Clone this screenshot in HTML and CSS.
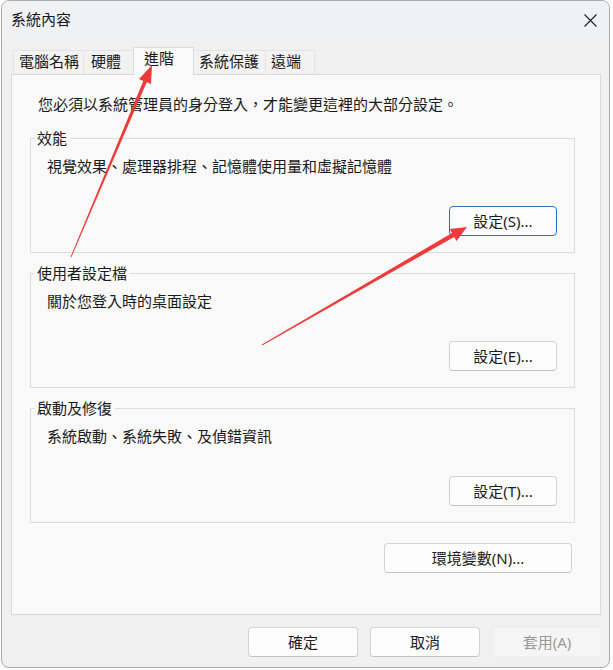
FILE: index.html
```html
<!DOCTYPE html>
<html lang="zh-Hant">
<head>
<meta charset="utf-8">
<title>系統內容</title>
<link rel="stylesheet" href="styles.css">
</head>
<body>
<div class="window">
  <div class="titlebar">
    <span class="title">系統內容</span>
    <span class="close" aria-label="關閉">
      <svg width="13" height="13" viewBox="0 0 13 13"><path d="M0.5 0.5 L12.5 12.5 M12.5 0.5 L0.5 12.5" stroke="#1f1f1f" stroke-width="1.1" fill="none"/></svg>
    </span>
  </div>
  <div class="tabs">
    <div class="tab t1">電腦名稱</div>
    <div class="tab t2">硬體</div>
    <div class="tab t3 active">進階</div>
    <div class="tab t4">系統保護</div>
    <div class="tab t5">遠端</div>
  </div>
  <div class="panel">
    <p class="intro">您必須以系統管理員的身分登入，才能變更這裡的大部分設定。</p>
    <fieldset class="group">
      <legend>效能</legend>
      <p class="desc">視覺效果、處理器排程、記憶體使用量和虛擬記憶體</p>
      <div class="actions"><button class="btn set focus">設定(S)...</button></div>
    </fieldset>
    <fieldset class="group">
      <legend>使用者設定檔</legend>
      <p class="desc">關於您登入時的桌面設定</p>
      <div class="actions"><button class="btn set">設定(E)...</button></div>
    </fieldset>
    <fieldset class="group">
      <legend>啟動及修復</legend>
      <p class="desc">系統啟動、系統失敗、及偵錯資訊</p>
      <div class="actions"><button class="btn set">設定(T)...</button></div>
    </fieldset>
    <div class="env-row"><button class="btn env">環境變數(N)...</button></div>
  </div>
  <div class="footer">
    <button class="btn foot">確定</button>
    <button class="btn foot">取消</button>
    <button class="btn foot disabled">套用(A)</button>
  </div>
</div>
<svg class="arrows" width="613" height="670" viewBox="0 0 613 670">
  <polygon fill="#ee3a3a" points="71.4,257.2 146.7,82.3 151.0,84.1 152,65 139.0,79.1 143.3,80.9 70.6,256.8"/>
  <polygon fill="#ee3a3a" points="262.2,345.4 454.2,236.9 456.6,241.1 467,227 449.6,228.9 452.0,233.1 261.8,344.6"/>
</svg>
</body>
</html>
```
FILE: styles.css
```css
* { box-sizing: border-box; }
html, body {
  margin: 0;
  padding: 0;
  background: #ffffff;
}
body {
  font-family: "Noto Sans", "Noto Sans CJK TC", sans-serif;
  font-size: 15px;
  color: #1a1a1a;
  width: 613px;
  height: 670px;
  overflow: hidden;
}
.window {
  margin-left: 1px;
  width: 609px;
  height: 668px;
  border: 1px solid #ababab;
  border-radius: 8px;
  background: #f0f0f0;
  display: flex;
  flex-direction: column;
  overflow: hidden;
}
.titlebar {
  height: 40px;
  display: flex;
  justify-content: space-between;
  align-items: center;
  padding: 0 12px 0 9px;
  background: #eff1f3;
}
.title {
  line-height: 20px;
  margin-top: -4px;
}
.close {
  display: flex;
  margin-top: -2px;
}
.tabs {
  height: 33px;
  display: flex;
  align-items: flex-end;
  padding-left: 11px;
  position: relative;
  z-index: 2;
}
.tab {
  height: 24px;
  line-height: 21px;
  border: 1px solid #e3e3e3;
  border-bottom: none;
  background: #f2f2f2;
  white-space: nowrap;
  margin-right: -1px;
}
.t1 { width: 71px; padding-left: 5px; }
.t2 { width: 51px; padding-left: 7px; }
.t3 { width: 61px; padding-left: 10px; }
.t4 { width: 73px; padding-left: 5px; }
.t5 { width: 50px; padding-left: 5px; }
.tab.active {
  height: 28px;
  margin-bottom: -1px;
  line-height: 21px;
  background: #f9f9f9;
  border-color: #dadada;
  position: relative;
  z-index: 3;
}
.panel {
  margin: 0 8px 0 9px;
  height: 541px;
  border: 1px solid #d9d9d9;
  background: #f9f9f9;
  padding: 19px 25px 0 18px;
  display: flex;
  flex-direction: column;
}
.intro {
  margin: 0 0 0 8px;
  line-height: 20px;
}
.group {
  margin: 14px 0 0;
  padding: 0 17px 16px 3px;
  border: 1px solid #dcdcdc;
  min-width: 0;
}
.group + .group { margin-top: 10px; }
.group legend {
  padding: 0 3px;
  line-height: 20px;
}
.desc {
  margin: 8px 0 0 13px;
  line-height: 20px;
}
.actions {
  margin-top: 30px;
  display: flex;
  justify-content: flex-end;
}
.btn {
  font: inherit;
  color: #1b1b1b;
  height: 30px;
  padding: 0;
  background: #fdfdfd;
  border: 1px solid #d3d3d3;
  border-bottom-color: #c2c2c2;
  border-radius: 4px;
  line-height: 26px;
}
.set { width: 108px; }
.focus {
  border-color: #2b72c2;
}
.env-row {
  margin-top: 20px;
  display: flex;
  justify-content: flex-end;
  padding-right: 3px;
}
.env { width: 188px; }
.footer {
  flex: 1;
  display: flex;
  justify-content: flex-end;
  align-items: flex-start;
  gap: 12px;
  padding: 12px 7px 0 0;
}
.foot { width: 110px; }
.disabled {
  background: #f5f5f5;
  border-color: #ececec;
  color: #9a9a9a;
}
.arrows {
  position: absolute;
  top: 0;
  left: 0;
  pointer-events: none;
  z-index: 10;
}
```
